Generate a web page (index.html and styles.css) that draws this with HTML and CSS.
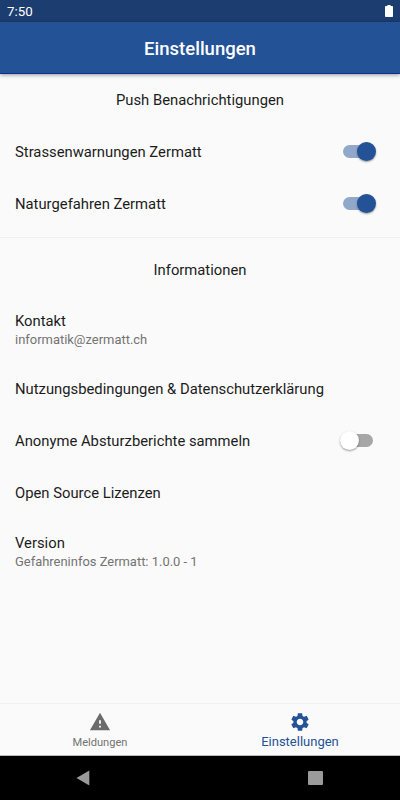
FILE: index.html
```html
<!DOCTYPE html>
<html lang="de">
<head>
    <meta charset="UTF-8">
    <meta name="viewport" content="width=device-width, initial-scale=1.0">
    <title>Einstellungen</title>
    <link rel="stylesheet" href="styles.css">
</head>
<body>
    <div class="status-bar">
        <span>7:50</span>
        <svg class="battery" viewBox="0 0 8 12"><path d="M2.4 0h3.2v1.1h1.6q.8 0 .8.8v9.3q0 .8-.8.8H.8q-.8 0-.8-.8V1.900q0-.8.8-.8h1.600z"/></svg>
    </div>
    <header class="app-bar">
        <h1>Einstellungen</h1>
    </header>

    <main class="content">
        <h2 class="section-title">Push Benachrichtigungen</h2>
        <div class="row">
            <span>Strassenwarnungen Zermatt</span>
            <span class="switch on"></span>
        </div>
        <div class="row">
            <span>Naturgefahren Zermatt</span>
            <span class="switch on"></span>
        </div>
        <div class="divider"></div>
        <h2 class="section-title">Informationen</h2>
        <div class="row two-line">
            <span>Kontakt</span>
            <small>informatik@zermatt.ch</small>
        </div>
        <div class="row">
            <span>Nutzungsbedingungen &amp; Datenschutzerklärung</span>
        </div>
        <div class="row">
            <span>Anonyme Absturzberichte sammeln</span>
            <span class="switch"></span>
        </div>
        <div class="row">
            <span>Open Source Lizenzen</span>
        </div>
        <div class="row two-line">
            <span>Version</span>
            <small>Gefahreninfos Zermatt: 1.0.0 - 1</small>
        </div>
    </main>

    <nav class="tabs">
        <div class="tab">
            <svg viewBox="0 0 24 24"><path d="M1 21h22L12 2 1 21zm12-3h-2v-2h2v2zm0-4h-2v-4h2v4z"/></svg>
            <span>Meldungen</span>
        </div>
        <div class="tab active">
            <svg viewBox="0 0 24 24"><path d="M19.14 12.94c.04-.3.06-.61.06-.94 0-.32-.02-.64-.07-.94l2.030-1.580c.18-.14.23-.41.12-.61l-1.920-3.320c-.12-.22-.37-.29-.59-.22l-2.390.96c-.5-.38-1.030-.7-1.620-.94l-.36-2.540c-.04-.24-.24-.41-.48-.41h-3.840c-.24 0-.43.17-.47.41l-.36 2.540c-.59.24-1.130.57-1.620.94l-2.390-.96c-.22-.08-.47 0-.59.22L2.740 8.870c-.12.21-.08.47.12.61l2.030 1.580c-.05.3-.09.63-.09.94s.02.64.07.94l-2.030 1.580c-.18.14-.23.41-.12.61l1.920 3.320c.12.22.37.29.59.22l2.390-.96c.5.38 1.030.7 1.620.94l.36 2.540c.05.24.24.41.48.41h3.840c.24 0 .44-.17.47-.41l.36-2.540c.59-.24 1.130-.56 1.620-.94l2.390.96c.22.08.47 0 .59-.22l1.920-3.320c.12-.22.07-.47-.12-.61l-2.010-1.580zM12 15.6c-1.980 0-3.600-1.620-3.600-3.600s1.620-3.600 3.600-3.600 3.600 1.620 3.600 3.600-1.620 3.600-3.600 3.600z"/></svg>
            <span>Einstellungen</span>
        </div>
    </nav>
    <div class="system-nav">
        <svg viewBox="0 0 14 16"><path d="M13.300.5v15L.5 8z"/></svg>
        <span class="recent"></span>
    </div>
</body>
</html>
```
FILE: styles.css
```css
* {
    box-sizing: border-box;
}
body {
    margin: 0;
    height: 800px;
    display: flex;
    flex-direction: column;
    overflow: hidden;
    font-family: Roboto, sans-serif;
    background-color: #fafafa;
    color: #1c1c1c;
}
h1, h2 {
    margin: 0;
}
.status-bar {
    height: 22px;
    padding: 0 7px;
    display: flex;
    align-items: center;
    justify-content: space-between;
    background-color: #1c3d70;
    color: #fff;
    font-size: 13.3px;
}
.battery {
    width: 8px;
    height: 12px;
    fill: #fff;
}
.app-bar {
    height: 52px;
    padding-top: 2px;
    display: flex;
    align-items: center;
    justify-content: center;
    background-color: #245297;
    border-bottom: 1px solid #08328a;
    box-shadow: 0 1px 4px rgba(0, 0, 0, 0.4);
    color: #fff;
}
.app-bar h1 {
    font-size: 18.5px;
    font-weight: 500;
}
.content {
    flex: 1;
}
.section-title {
    height: 52px;
    line-height: 52px;
    font-size: 14.8px;
    font-weight: 400;
    text-align: center;
}
.row {
    height: 52px;
    padding: 0 27px 0 15px;
    display: flex;
    align-items: center;
    justify-content: space-between;
    font-size: 14.8px;
}
.two-line {
    height: 66.5px;
    padding-top: 1px;
    flex-direction: column;
    align-items: flex-start;
    justify-content: center;
    gap: 1px;
}
.two-line span {
    line-height: 18px;
}
.two-line small {
    font-size: 12.95px;
    line-height: 17px;
    color: #737373;
}
.divider {
    height: 14px;
    padding: 7px 0 6px;
    background-color: #f0f0f0;
    background-clip: content-box;
}
.switch {
    width: 30px;
    height: 13px;
    display: flex;
    align-items: center;
    border-radius: 7px;
    background-color: #a6a6a6;
}
.switch::before {
    content: "";
    flex: none;
    width: 19px;
    height: 19px;
    margin-left: -3px;
    border-radius: 50%;
    background-color: #fff;
    box-shadow: 0 1px 2px rgba(0, 0, 0, 0.4);
}
.switch.on {
    margin-bottom: 1px;
    background-color: #91a8cb;
}
.switch.on::before {
    margin-left: 14px;
    background-color: #245297;
}
.tabs {
    height: 53px;
    display: flex;
    border-top: 1px solid #f0f0f0;
    border-bottom: 1px solid #bbb;
}
.tab {
    flex: 1;
    display: flex;
    flex-direction: column;
    align-items: center;
    padding-top: 7px;
    font-size: 11.1px;
    color: #737373;
}
.tab svg {
    width: 22px;
    height: 22px;
    fill: #6b6b6b;
}
.tab span {
    line-height: 19px;
}
.tab.active {
    font-size: 13px;
    color: #245297;
}
.tab.active span {
    line-height: 17px;
}
.tab.active svg {
    fill: #245297;
}
.system-nav {
    height: 44px;
    padding: 0 77px 0 76px;
    display: flex;
    align-items: center;
    justify-content: space-between;
    background-color: #000;
}
.system-nav svg {
    width: 14px;
    height: 16px;
    fill: #9a9a9a;
}
.recent {
    width: 15px;
    height: 14px;
    border-radius: 1px;
    background-color: #9a9a9a;
}
```
